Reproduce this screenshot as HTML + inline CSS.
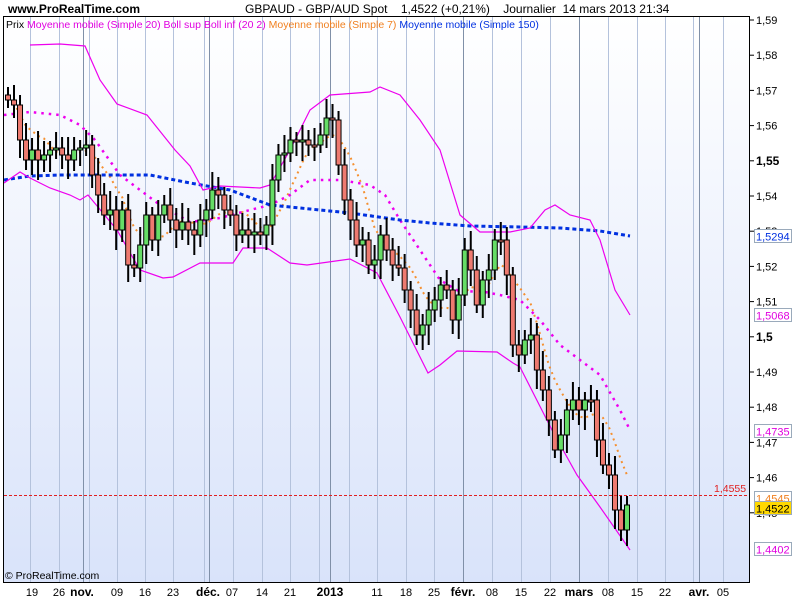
<!DOCTYPE html>
<html><head><meta charset="utf-8"><style>
body{margin:0;width:800px;height:600px;overflow:hidden;background:#fff;font-family:"Liberation Sans",sans-serif}
svg{position:absolute;left:0;top:0}
</style></head><body>
<svg id="s" width="800" height="600" xmlns="http://www.w3.org/2000/svg" font-family="Liberation Sans, sans-serif">
<defs><linearGradient id="g" x1="0" y1="0" x2="0" y2="1"><stop offset="0" stop-color="#ffffff"/><stop offset="1" stop-color="#d9e3fa"/></linearGradient></defs>
<rect x="3" y="16" width="746" height="566" fill="url(#g)"/>
<g id="grid"></g>
<g id="ind"></g>
<g id="cand"></g>
<rect x="3.5" y="16.5" width="746" height="566" fill="none" stroke="#000"/>
<text x="8" y="13" font-size="12" font-weight="bold">www.ProRealTime.com</text>
<text x="245" y="13" font-size="12" xml:space="preserve">GBPAUD - GBP/AUD Spot    1,4522 (+0,21%)    Journalier  14 mars 2013 21:34</text>
<text x="6" y="28" font-size="10.5"><tspan fill="#000">Prix </tspan><tspan fill="#e000e0">Moyenne mobile (Simple 20)  Boll sup Boll inf (20 2) </tspan><tspan fill="#f08020">Moyenne mobile (Simple 7) </tspan><tspan fill="#0030e0"> Moyenne mobile (Simple 150)</tspan></text>
<text x="5" y="579" font-size="10.5">© ProRealTime.com</text>
<g id="axis"></g>
<line x1="4" y1="495.5" x2="749" y2="495.5" stroke="#e02020" stroke-dasharray="3,2"/>
<text x="714" y="492" font-size="10.5" fill="#e02020">1,4555</text>
</svg>
<script>
(function(){
var NS="http://www.w3.org/2000/svg";
function el(p,t,a,txt){var e=document.createElementNS(NS,t);for(var k in a)e.setAttribute(k,a[k]);if(txt!=null)e.textContent=txt;document.getElementById(p).appendChild(e);return e;}
function Y(v){return 20+(1.59-v)*3520;}
[[30,0],[59,0],[83,1],[89,0],[117,0],[145,0],[173,0],[204,0],[209,1],[233,0],[262,0],[290,0],[319,0],[330,1],[349,0],[377,0],[406,0],[434,0],[463,1],[492,0],[521,0],[550,0],[579,1],[608,0],[637,0],[665,0],[693,0],[699,1],[723,0]].forEach(function(g){
el("grid","line",{x1:g[0]+.5,y1:17,x2:g[0]+.5,y2:582,stroke:g[1]?"#8090a8":"#b4c2dc","stroke-width":1});});
[["19",32],["26",59],["nov.",82,1],["09",117],["16",145],["23",173],["déc.",208,1],["07",232],["14",262],["21",290],["2013",330,1],["11",377],["18",406],["25",434],["févr.",463,1],["08",492],["15",521],["22",550],["mars",579,1],["08",608],["15",637],["22",665],["avr.",699,1],["05",723]].forEach(function(l){
el("axis","text",{x:l[1],y:596,"font-size":l[2]?12:11,"font-weight":l[2]?"bold":"normal","text-anchor":"middle"},l[0]);});
for(var i=0;i<=14;i++){var v=1.59-i*0.01;var yy=Y(v);var s=(Math.round(v*100)/100).toFixed(2).replace(".",",").replace(/0$/,"");
el("axis","line",{x1:749,y1:yy,x2:754,y2:yy,stroke:"#000"});
var bold=(i==4||i==9);el("axis","text",{x:756,y:yy+4,"font-size":bold?12:11,"font-weight":bold?"bold":"normal"},s);}
[["1,5294",236,"#0030e0","#fff"],["1,5068",315,"#e000e0","#fff"],["1,4735",431,"#e000e0","#fff"],["1,4545",498,"#f08020","#fff"],["1,4522",508,"#000","#ffd800"],["1,4402",549,"#e000e0","#fff"]].forEach(function(b){
el("axis","rect",{x:754.5,y:b[1]-6.5,width:37,height:13,fill:b[3],stroke:"#9aaabb"});
el("axis","text",{x:756,y:b[1]+4.5,"font-size":11,fill:b[2]},b[0]);});
var C=[100,105,140,160,150,160,155,150,148,155,160,150,148,145,175,195,215,210,230,210,265,268,245,215,240,215,205,220,230,222,230,235,220,210,190,195,210,215,235,230,235,232,235,225,180,155,153,140,142,140,145,145,135,118,120,165,200,220,245,240,265,260,235,250,265,268,290,310,335,325,310,300,285,290,320,295,250,270,305,280,270,240,240,275,345,355,340,335,370,390,420,450,435,410,400,410,400,400,440,465,475,510,530,505];
var n=C.length,x0=8,dx=(627-8)/(n-1);
var prev=95;
for(var i=0;i<n;i++){var x=x0+i*dx,o=prev,c=C[i];var tp=Math.min(o,c),bt=Math.max(o,c);
var hi=tp-8-((i*7)%12),lo=bt+8+((i*5)%13);
el("cand","line",{x1:x,y1:hi,x2:x,y2:lo,stroke:"#000","stroke-width":2});
if(bt-tp<2){bt=tp+2;}
el("cand","rect",{x:x-2.5,y:tp,width:5,height:bt-tp,fill:c<o?"#66dd66":"#ee7a70",stroke:"#000","stroke-width":1});
prev=c;}
function pl(pts,col,w,da){el("ind","polyline",{points:pts.map(function(p){return p.join(",")}).join(" "),fill:"none",stroke:col,"stroke-width":w,"stroke-dasharray":da||"none"});}
var m7=[];for(var i=0;i<n;i++){var sm=0,k=0;for(var j=Math.max(0,i-6);j<=i;j++){sm+=C[j];k++;}m7.push([x0+i*dx,sm/k]);}
pl(m7.slice(1),"#f59030",2,"2,4");
pl([[4,115],[30,112],[60,115],[80,125],[95,140],[120,175],[140,190],[160,205],[190,222],[220,218],[250,210],[270,205],[290,195],[310,180],[340,180],[370,185],[385,195],[400,220],[420,250],[440,280],[460,292],[480,291],[500,295],[520,300],[540,320],[560,345],[580,360],[600,375],[620,410],[630,430]],"#ee00ee",2.5,"2.5,5");
pl([[4,180],[30,176],[60,175],[100,175],[150,175],[190,183],[230,190],[270,205],[300,208],[350,213],[400,220],[430,223],[470,226],[520,227],[560,228],[600,231],[630,236]],"#0030e0",3,"4,3");
pl([[30,45],[60,44],[85,46],[100,80],[117,104],[147,115],[175,150],[190,166],[203,190],[220,186],[260,188],[270,185],[290,150],[310,110],[330,95],[370,92],[380,87],[400,95],[420,120],[440,150],[460,215],[480,232],[510,232],[530,228],[545,210],[555,205],[570,215],[590,220],[600,240],[615,290],[630,315]],"#ee00ee",1.2);
pl([[4,183],[20,172],[30,178],[50,188],[70,195],[80,200],[88,195],[117,230],[140,270],[163,278],[173,277],[200,263],[233,263],[243,248],[267,248],[290,263],[307,265],[350,259],[377,273],[400,317],[428,373],[440,365],[457,351],[497,352],[513,363],[520,367],[553,432],[577,475],[600,507],[630,550]],"#ee00ee",1.2);
})();
</script>
</body></html>
